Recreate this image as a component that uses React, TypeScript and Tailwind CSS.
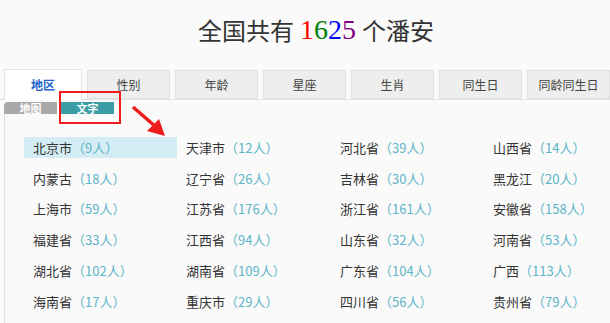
const tabs = ["地区", "性别", "年龄", "星座", "生肖", "同生日", "同龄同生日"];

const regions: [string, number][] = [
  ["北京市", 9], ["天津市", 12], ["河北省", 39], ["山西省", 14],
  ["内蒙古", 18], ["辽宁省", 26], ["吉林省", 30], ["黑龙江", 20],
  ["上海市", 59], ["江苏省", 176], ["浙江省", 161], ["安徽省", 158],
  ["福建省", 33], ["江西省", 94], ["山东省", 32], ["河南省", 53],
  ["湖北省", 102], ["湖南省", 109], ["广东省", 104], ["广西", 113],
  ["海南省", 17], ["重庆市", 29], ["四川省", 56], ["贵州省", 79],
  ["云南省", 41], ["西藏", 3], ["陕西省", 48], ["甘肃省", 21],
];

const cjk = { fontFamily: '"Noto Sans CJK SC", sans-serif' };

const App = () => {
  return (
    <div className="relative w-[610px] h-[323px] overflow-hidden bg-[#fafafa]" style={cjk}>
      <div className="h-[60px] pl-[22px] flex items-center justify-center text-[24px] text-[#333] leading-none">
        <span>全国共有</span>
        <span className="mx-[6px] text-[28px]" style={{ fontFamily: '"Liberation Serif", serif' }}>
          <span className="text-[#ff0000]">1</span>
          <span className="text-[#008000]">6</span>
          <span className="text-[#0000ff]">2</span>
          <span className="text-[#800080]">5</span>
        </span>
        <span>个潘安</span>
      </div>

      <div className="mt-[9px] flex gap-[5px] pl-[4px] border-b border-[#e2e2e2] h-[31px]">
        {tabs.map((t, i) =>
          i === 0 ? (
            <div
              key={t}
              className="w-[82px] h-[31px] flex items-center justify-center bg-white border border-b-0 border-[#e2e2e2] text-[12px] font-bold text-[#1f63c9]"
            >
              {t}
            </div>
          ) : (
            <div
              key={t}
              className="w-[83px] shrink-0 h-[29px] mt-[1px] flex items-center justify-center bg-[#eeeeee] border border-[#e0e0e0] text-[12px] text-[#444]"
            >
              {t}
            </div>
          )
        )}
      </div>

      <div className="flex gap-[4px] pl-[4px] mt-[2px]">
        <div className="w-[53px] h-[12px] rounded-tl-[4px] bg-[#a9a9a9] text-white text-[11px] font-bold leading-[12px] text-center">
          地图
        </div>
        <div className="w-[53px] h-[12px] bg-[#3b9da6] text-white text-[11px] font-bold leading-[12px] text-center">
          文字
        </div>
      </div>

      <div className="ml-[4px] border-l border-[#e2e2e2] pl-[19px] pt-[23px] h-[240px]">
        <div className="grid grid-cols-[153px_154px_153px_153px] gap-y-[9.8px]">
          {regions.map(([name, n], i) => (
            <div
              key={name}
              className={`h-[21px] flex items-center pl-[9px] text-[13px] whitespace-nowrap ${
                i === 0 ? "bg-[#d4edf4]" : ""
              }`}
            >
              <span className="text-[#333]">{name}</span>
              <span className="text-[#5cb5c8]">（{n}人）</span>
            </div>
          ))}
        </div>
      </div>

      <div className="absolute left-[59px] top-[91px] w-[62px] h-[33px] border-2 border-[#ee1c1c]" />
      <svg className="absolute left-[130px] top-[104px]" width="40" height="36" viewBox="0 0 40 36">
        <line x1="3" y1="3" x2="26" y2="23" stroke="#ee1c1c" strokeWidth="3.5" />
        <polygon points="35,32 17,27 29,15" fill="#ee1c1c" />
      </svg>
    </div>
  );
};

export default App;
